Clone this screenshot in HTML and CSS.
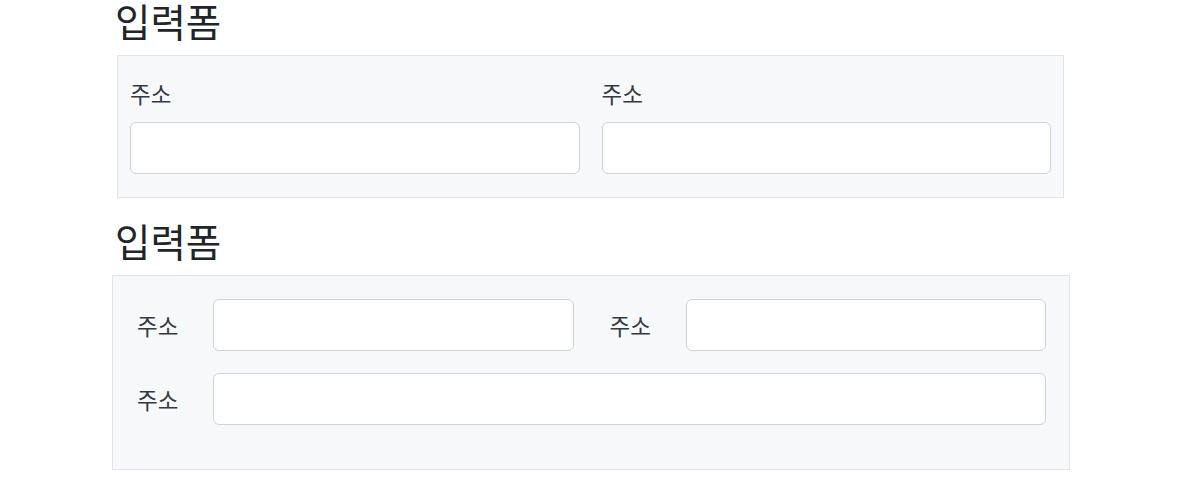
FILE: index.html
```html
<!DOCTYPE html>
<html lang="ko">
<head>
<meta charset="utf-8">
<link rel="stylesheet" href="styles.css">
</head>
<body>
<div class="page">
  <h2 class="title">입력폼</h2>
  <div class="panel panel-stacked">
    <div class="field">
      <label class="field-label">주소</label>
      <input class="field-input" type="text">
    </div>
    <div class="field">
      <label class="field-label">주소</label>
      <input class="field-input" type="text">
    </div>
  </div>

  <h2 class="title title-second">입력폼</h2>
  <div class="panel panel-inline">
    <div class="row">
      <div class="pair">
        <label class="pair-label">주소</label>
        <input class="field-input" type="text">
      </div>
      <div class="pair">
        <label class="pair-label">주소</label>
        <input class="field-input" type="text">
      </div>
    </div>
    <div class="row">
      <div class="pair">
        <label class="pair-label">주소</label>
        <input class="field-input" type="text">
      </div>
    </div>
  </div>
</div>
</body>
</html>
```
FILE: styles.css
```css
* { box-sizing: border-box; }
body {
  margin: 0;
  background: #ffffff;
  font-family: "Noto Sans CJK KR", "Noto Sans", sans-serif;
  color: #212529;
}
.page {
  padding-left: 115px;
  width: 1069px;
}
.title {
  margin: 0;
  font-size: 38.5px;
  font-weight: 400;
  line-height: 41px;
  color: #212529;
}
.title-second {
  margin-top: 22px;
}
.panel {
  background: #f7f8fa;
  border: 1px solid #e1e4e8;
}
.panel-stacked {
  margin-left: 2px;
  width: 947px;
  margin-top: 14px;
  padding: 22px 12px 23px 12px;
  display: flex;
  gap: 22px;
}
.field {
  flex: 1;
  display: flex;
  flex-direction: column;
}
.field-label {
  font-size: 22.5px;
  line-height: 30px;
  color: #343a40;
  margin-bottom: 14px;
}
.field-input {
  display: block;
  width: 100%;
  height: 52px;
  border: 1px solid #ced4da;
  border-radius: 6px;
  background: #ffffff;
  font: inherit;
  padding: 0 12px;
  outline: none;
}
.panel-inline {
  margin-left: -3px;
  width: 958px;
  margin-top: 14px;
  padding: 23px 23px 44px 24px;
  display: flex;
  flex-direction: column;
  gap: 22px;
}
.row {
  display: flex;
  gap: 36px;
}
.pair {
  flex: 1;
  display: flex;
  align-items: center;
}
.pair-label {
  flex: 0 0 76px;
  font-size: 22.5px;
  color: #343a40;
}
.pair .field-input {
  flex: 1;
  width: auto;
}
```
